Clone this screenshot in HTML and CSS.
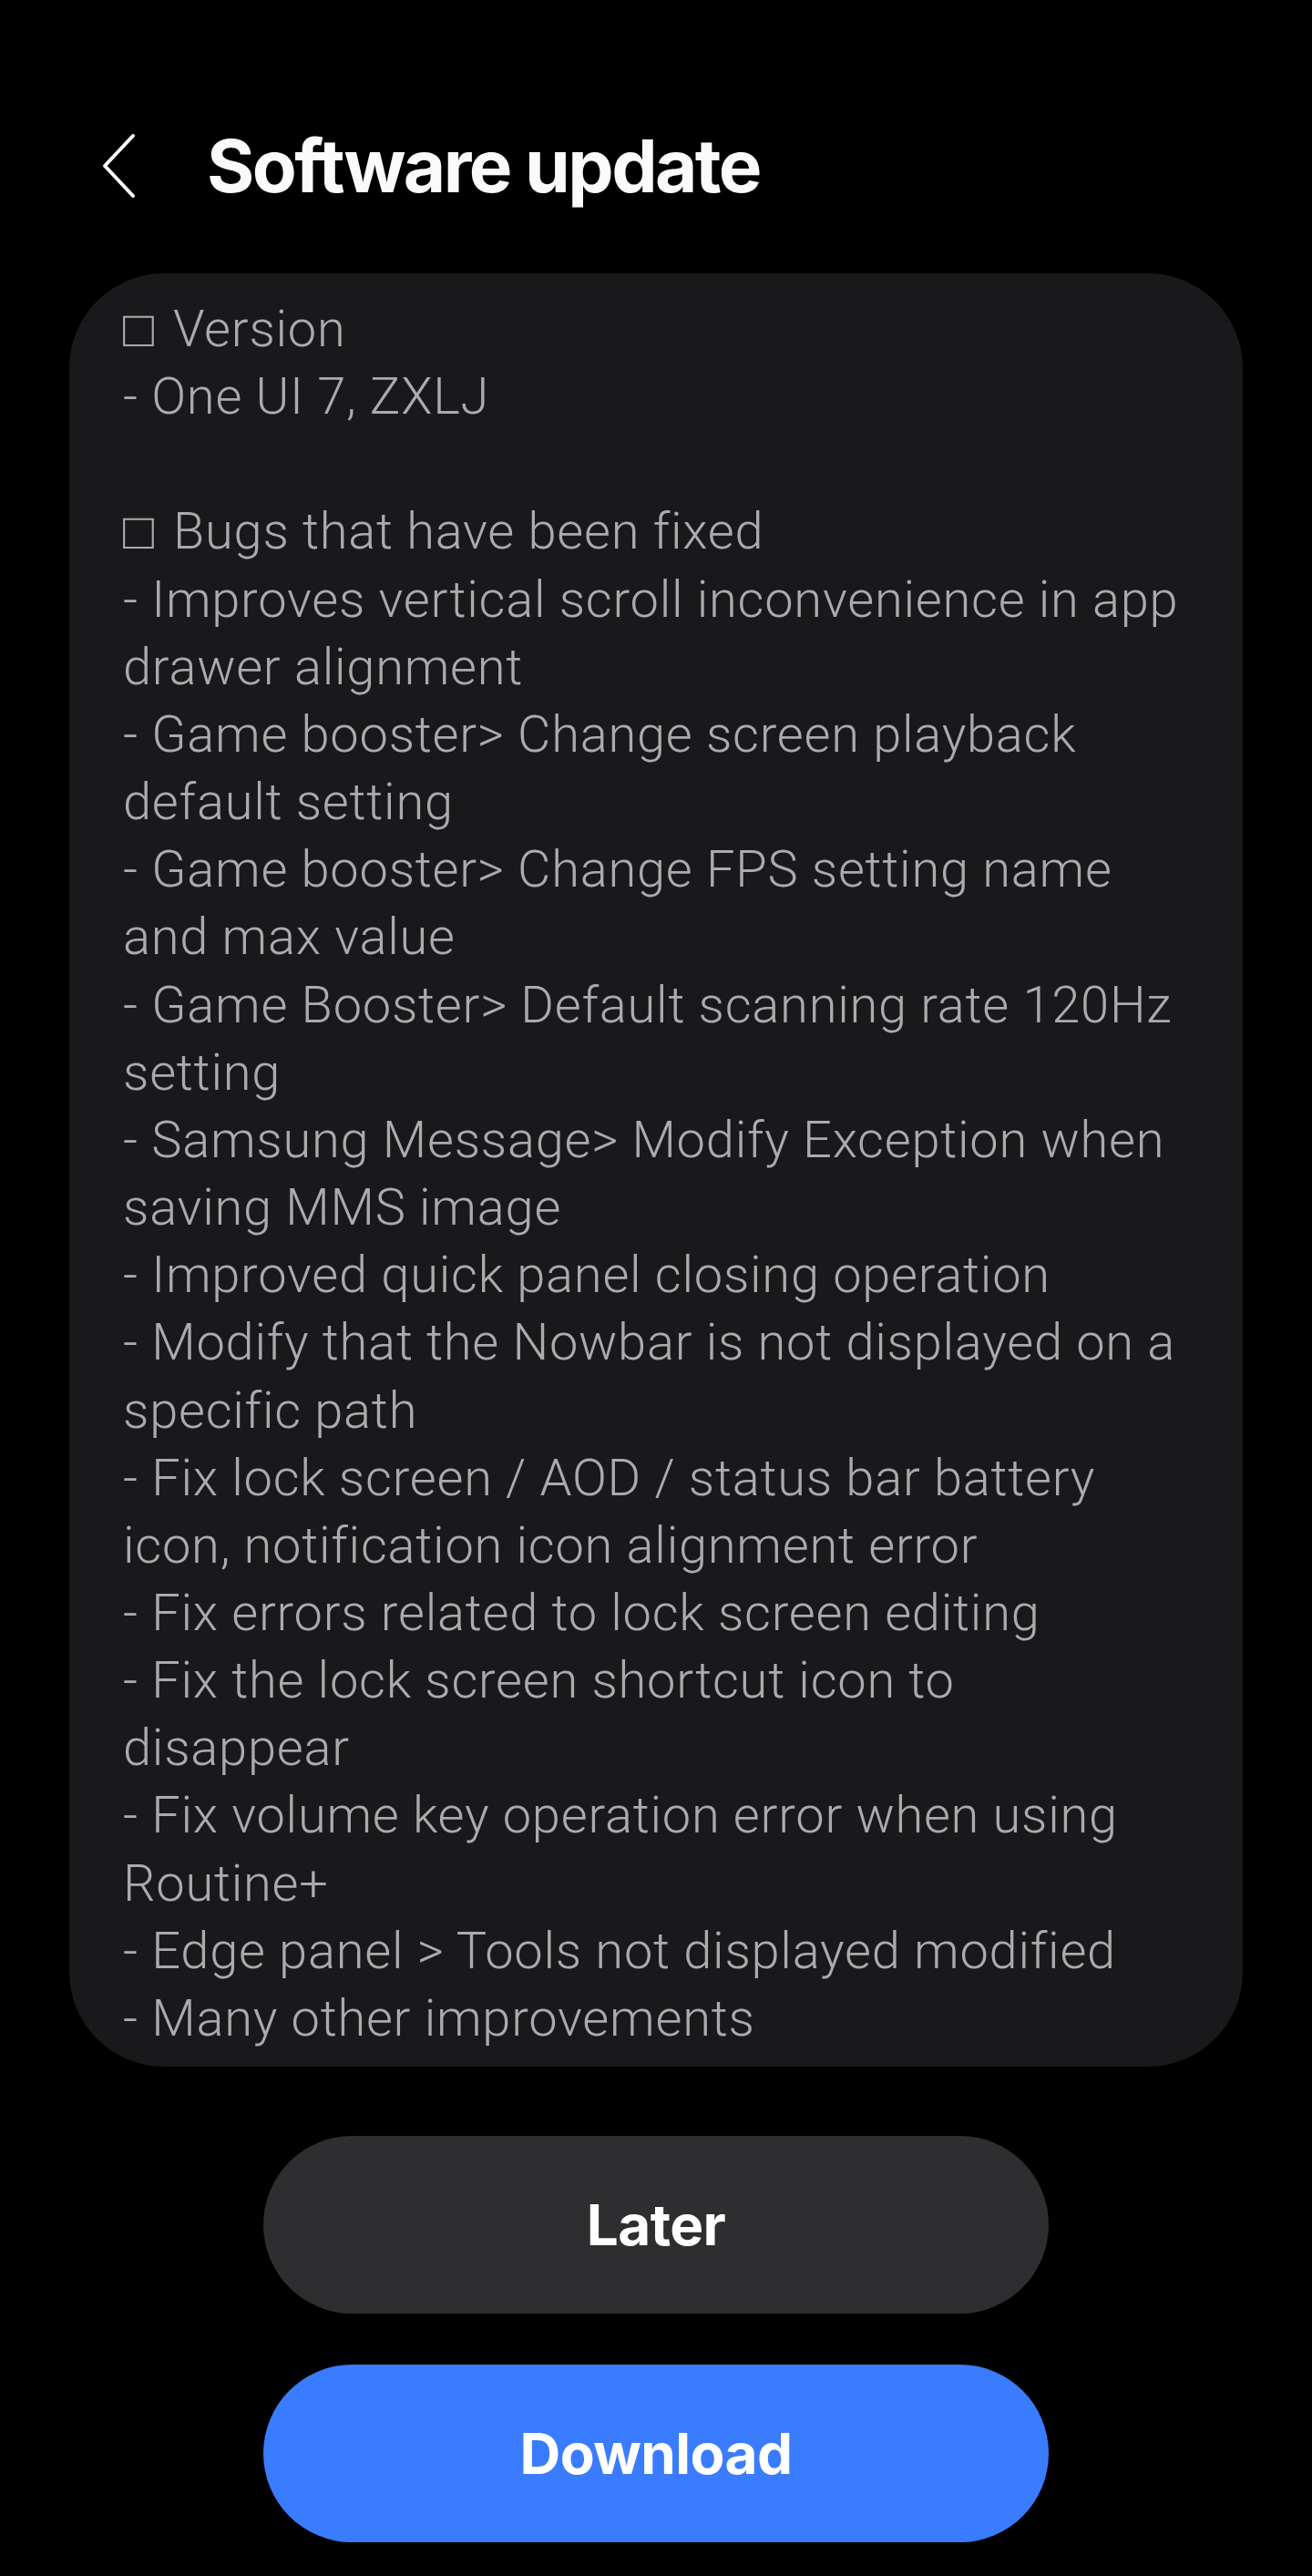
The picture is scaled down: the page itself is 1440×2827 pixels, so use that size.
FILE: index.html
```html
<!DOCTYPE html>
<html>
<head>
    <title>Software update</title>
    <meta charset="UTF-8">
    <meta name="viewport" content="width=device-width, initial-scale=1.0">
    <link rel="stylesheet" href="styles.css">
</head>
<body>
    <header class="topbar">
        <a class="back" href="#" aria-label="Back">
            <svg width="44" height="74" viewBox="0 0 44 74">
                <polyline points="36,5 5,38 36,71" fill="none" stroke="#fff" stroke-width="4" stroke-linecap="round" stroke-linejoin="round"/>
            </svg>
        </a>
        <h1>Software update</h1>
    </header>

    <section class="notes">
        <p><span class="box">□</span> Version</p>
        <p>- One UI 7, ZXLJ</p>
        <p class="blank">&nbsp;</p>
        <p><span class="box">□</span> Bugs that have been fixed</p>
        <p>- Improves vertical scroll inconvenience in app<br>drawer alignment</p>
        <p>- Game booster&gt; Change screen playback<br>default setting</p>
        <p>- Game booster&gt; Change FPS setting name<br>and max value</p>
        <p>- Game Booster&gt; Default scanning rate 120Hz<br>setting</p>
        <p>- Samsung Message&gt; Modify Exception when<br>saving MMS image</p>
        <p>- Improved quick panel closing operation</p>
        <p>- Modify that the Nowbar is not displayed on a<br>specific path</p>
        <p>- Fix lock screen / AOD / status bar battery<br>icon, notification icon alignment error</p>
        <p>- Fix errors related to lock screen editing</p>
        <p>- Fix the lock screen shortcut icon to<br>disappear</p>
        <p>- Fix volume key operation error when using<br>Routine+</p>
        <p>- Edge panel &gt; Tools not displayed modified</p>
        <p>- Many other improvements</p>
    </section>

    <div class="actions">
        <button class="btn btn-later">Later</button>
        <button class="btn btn-download">Download</button>
    </div>
</body>
</html>
```

FILE: styles.css
```css
body {
    margin: 0;
    padding: 0;
    background-color: #000;
    color: #fff;
    font-family: Roboto, "Noto Sans", sans-serif;
}
.topbar {
    display: flex;
    align-items: center;
    height: 130px;
    padding: 116px 0 0 110px;
}
.back {
    display: flex;
    width: 44px;
    height: 74px;
}
.topbar h1 {
    margin: 0 0 0 73px;
    font-family: Inter, Roboto, sans-serif;
    font-size: 80px;
    font-weight: 700;
    letter-spacing: -2.6px;
    color: #fafafa;
}
.notes {
    margin: 54px 76px 0;
    padding: 24px 40px 16px 59px;
    background-color: #19191b;
    border-radius: 104px;
}
.notes p {
    margin: 0;
    font-size: 56px;
    font-weight: 350;
    line-height: 74.15px;
    letter-spacing: 0.75px;
    color: #ababad;
    white-space: nowrap;
}
.notes .box {
    margin-right: 6px;
}
.actions {
    display: flex;
    flex-direction: column;
    align-items: center;
    gap: 56px;
    margin-top: 76px;
}
.btn {
    width: 862px;
    height: 195px;
    border: none;
    border-radius: 98px;
    font-family: Inter, Roboto, sans-serif;
    font-size: 62px;
    font-weight: 700;
    letter-spacing: -0.6px;
    color: #fff;
    cursor: pointer;
}
.btn-later {
    background-color: #2e2e30;
}
.btn-download {
    background-color: #3a7cff;
}
```
